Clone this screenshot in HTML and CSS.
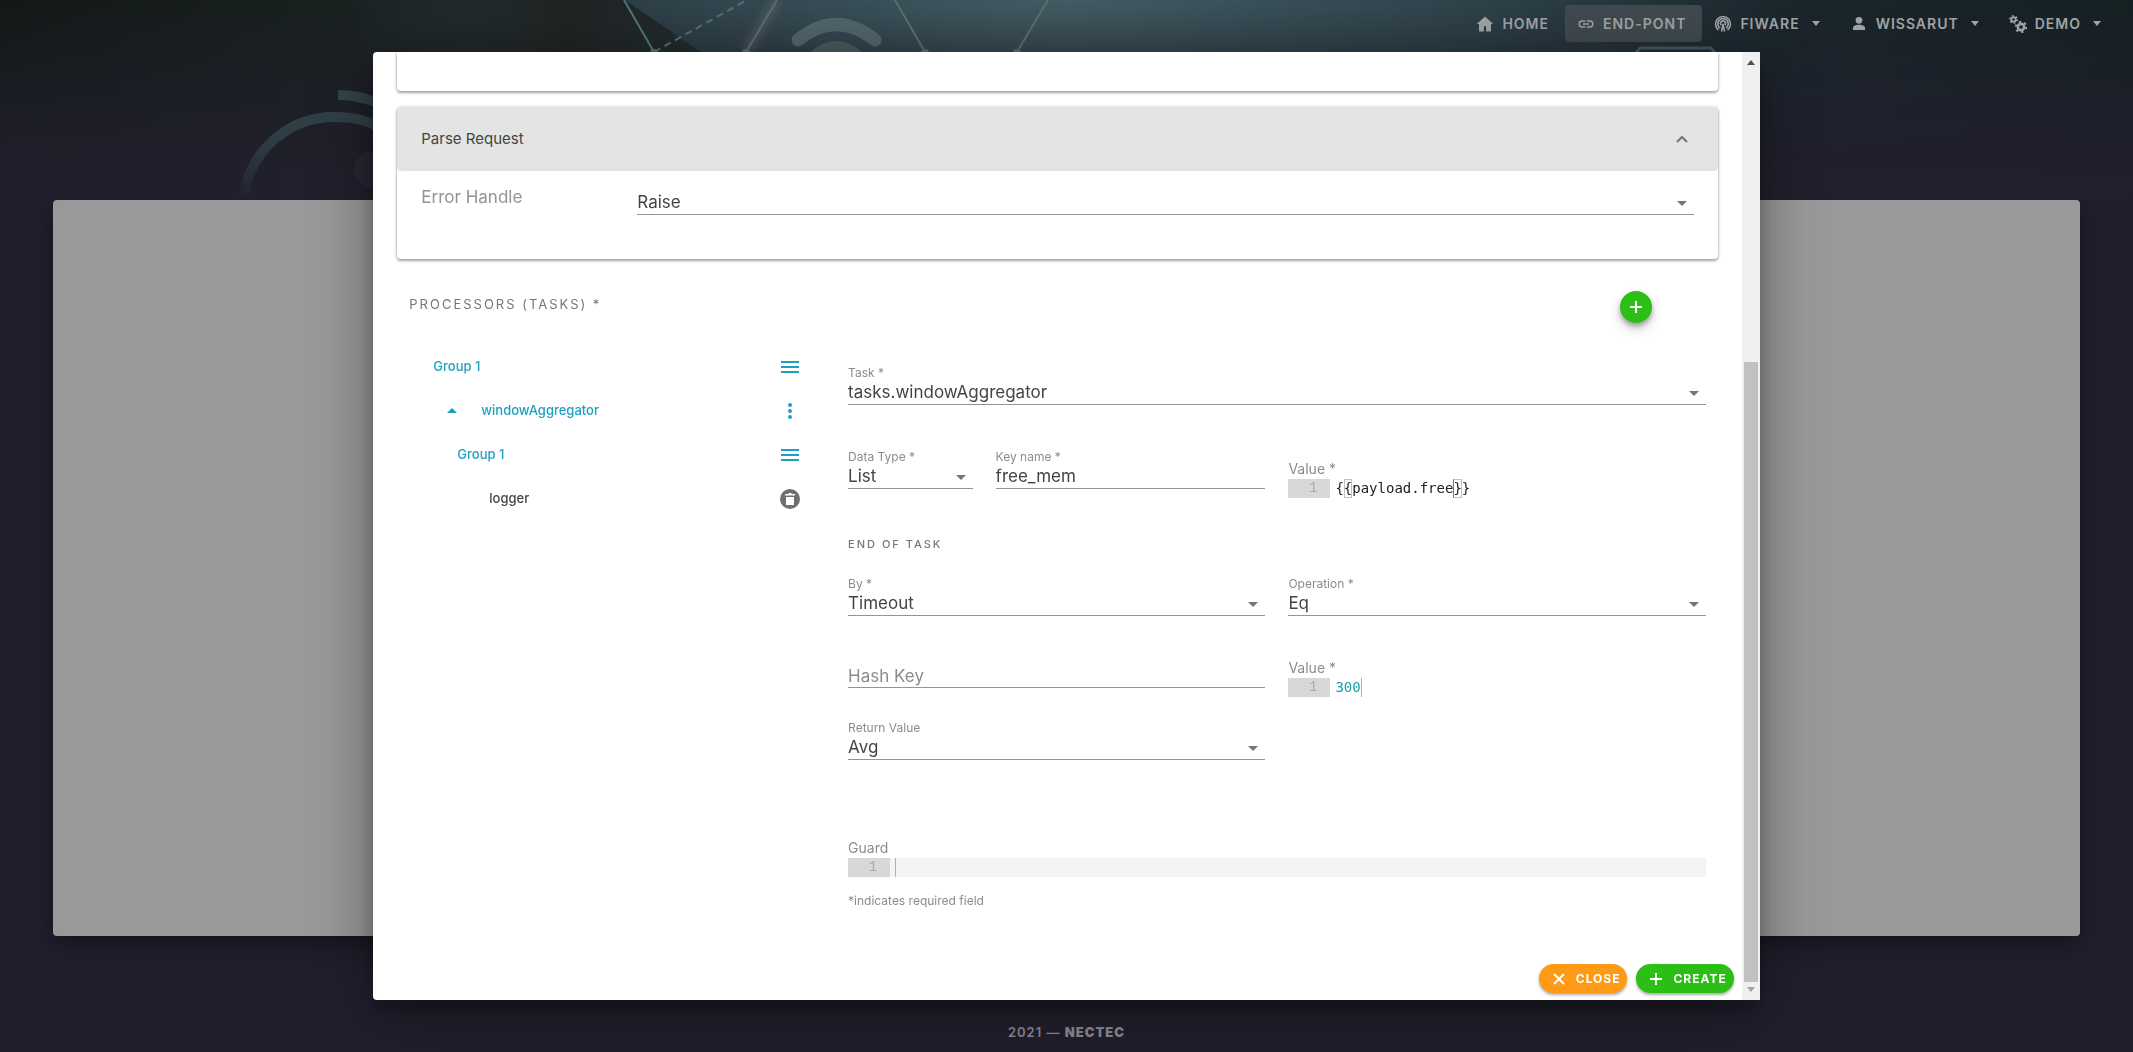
FILE: index.html
```html
<!DOCTYPE html>
<html lang="en">
<head>
<meta charset="utf-8">
<meta name="viewport" content="width=device-width, initial-scale=1">
<title>End-point</title>
<link rel="stylesheet" href="styles.css">
</head>
<body>
<header class="hero">
  <svg class="hero-art" viewBox="0 0 2133 200" preserveAspectRatio="xMidYMin slice" aria-hidden="true">
    <defs>
      <linearGradient id="fade" gradientUnits="userSpaceOnUse" x1="0" y1="90" x2="0" y2="200"><stop offset="0" stop-color="#33444b"/><stop offset=".5" stop-color="#2e3b43"/><stop offset="1" stop-color="#22212e"/></linearGradient>
      <linearGradient id="shade"><stop offset="0" stop-color="#1f2423" stop-opacity="0"/><stop offset=".6" stop-color="#1f2423"/><stop offset="1" stop-color="#222b2f"/></linearGradient>
      <filter id="glow" x="-2" y="-1" width="5" height="3"><feGaussianBlur stdDeviation="4"/></filter>
    </defs>
    <path d="M360 0h265l80 55H360z" fill="url(#shade)"/>
    <g fill="none" stroke="url(#fade)" stroke-width="10">
      <path d="M244 196A91 91 0 0 1 338 117Q360 117 380 127"/>
      <path d="M338 95Q360 95 380 104"/>
    </g>
    <circle cx="372" cy="170" r="18" fill="#272733"/>
    <g fill="none" stroke="#56706e" stroke-width="2">
      <path d="M624 0l30 52" stroke="#52786f"/>
      <path d="M654 52L747 0" stroke-dasharray="7 5"/>
      <path d="M777 0l-31 52" stroke="#8f7d7c" stroke-width="7" opacity=".4" filter="url(#glow)"/>
      <path d="M777 0l-31 52M895 0l30 52M1048 0l-31 52"/>
      <path d="M1425 50l3-2h49l5 8" stroke="#2c3d44"/>
      <path d="M1635 54l5-6h71l5 6" stroke="#405960" stroke-width="3"/>
    </g>
    <g fill="#56706e"><circle cx="654" cy="53" r="4"/><circle cx="746" cy="53" r="4"/><circle cx="925" cy="53" r="4"/><circle cx="1017" cy="53" r="4"/></g>
    <path d="M798 40Q836 9 875 40" fill="none" stroke="#50646a" stroke-width="13" stroke-linecap="round"/>
    <path d="M808 54Q836 28 865 54z" fill="#48595c"/>
  </svg>
  <nav class="nav" aria-label="Main">
    <a href="#home"><svg viewBox="0 0 24 24" width="18" height="18"><path d="M10.500 22v-7h3v7H20V12h3L12 2 1 12h3v10z" fill="currentColor"/></svg>Home</a>
    <a href="#endpoint" class="active"><svg viewBox="0 0 24 24" width="18" height="18"><path d="M3.900 12c0-1.710 1.390-3.100 3.100-3.100h4V7H7a5 5 0 0 0 0 10h4v-1.900H7A3.100 3.100 0 0 1 3.900 12zM8 13h8v-2H8zm9-6h-4v1.900h4a3.100 3.100 0 0 1 0 6.200h-4V17h4a5 5 0 0 0 0-10z" fill="currentColor"/></svg>End-Pont</a>
    <a href="#fiware" class="menu"><svg viewBox="0 0 24 24" width="18" height="22" fill="none" stroke="currentColor" stroke-width="2.200"><path d="M6 20A10 10 0 1 1 18 20M8 17.500A7 7 0 1 1 16 17.500M9.500 13.500A3.300 3.300 0 1 1 14.500 13.500M10 22l2-10 2 10"/></svg>Fiware<i class="caret"></i></a>
    <a href="#user" class="menu"><svg viewBox="0 0 24 24" width="18" height="18"><circle cx="12" cy="7" r="4.500" fill="currentColor"/><path d="M4 20v-3c0-2.500 4-4 8-4s8 1.500 8 4v3z" fill="currentColor"/></svg>Wissarut<i class="caret"></i></a>
    <a href="#demo"><svg viewBox="0 0 24 24" width="18" height="18" fill="none" stroke="currentColor"><circle cx="6" cy="6" r="3" stroke-width="2.500"/><circle cx="6" cy="6" r="5" stroke-width="2" stroke-dasharray="2.200 3.030"/><circle cx="16" cy="16" r="4.200" stroke-width="3.500"/><circle cx="16" cy="16" r="7" stroke-width="2.500" stroke-dasharray="3 4.330"/></svg>Demo<i class="caret"></i></a>
  </nav>
</header>
<div class="page-card"></div>
<footer class="page-footer">2021 — <b>NECTEC</b></footer>

<div class="backdrop">
  <div class="modal" role="dialog" aria-modal="true" aria-label="Create end-point">
    <form class="modal-body">
      <section class="card card-tail"></section>
      <section class="card">
        <button type="button" class="card-head" aria-expanded="true">Parse Request
          <svg viewBox="0 0 12 8" width="12" height="8"><path d="M1 7l5-5 5 5" fill="none" stroke="#757575" stroke-width="2"/></svg>
        </button>
        <div class="card-content">
          <label for="error">Error Handle</label>
          <span class="select"><select id="error"><option>Raise</option></select></span>
        </div>
      </section>

      <div class="section-head">
        <h2>Processors (Tasks) *</h2>
        <button type="button" class="fab" aria-label="Add processor"><svg viewBox="0 0 12 12" width="12" height="12"><path d="M6 0v12M0 6h12" stroke="#fff" stroke-width="2"/></svg></button>
      </div>

      <div class="tasks">
        <ul class="tree">
          <li class="l1"><span>Group 1</span><button type="button" aria-label="Group menu"><svg viewBox="0 0 20 20" width="20" height="20"><path d="M1 5h18M1 10h18M1 15h18" stroke="currentColor" stroke-width="2"/></svg></button></li>
          <li class="l2"><i class="caret up"></i><span>windowAggregator</span><button type="button" aria-label="Task menu"><svg viewBox="0 0 20 20" width="20" height="20" fill="currentColor"><circle cx="10" cy="4" r="2"/><circle cx="10" cy="10" r="2"/><circle cx="10" cy="16" r="2"/></svg></button></li>
          <li class="l3"><span>Group 1</span><button type="button" aria-label="Group menu"><svg viewBox="0 0 20 20" width="20" height="20"><path d="M1 5h18M1 10h18M1 15h18" stroke="currentColor" stroke-width="2"/></svg></button></li>
          <li class="l4"><span>logger</span><button type="button" aria-label="Delete logger"><svg viewBox="0 0 20 20" width="20" height="20"><circle cx="10" cy="10" r="10" fill="#6f6f6f"/><path d="M5 5h3l1-1h2l1 1h3v1.500H5zM6 8h8v8H6z" fill="#fff"/></svg></button></li>
        </ul>

        <div class="fields">
          <div class="field wide">
            <label for="task">Task *</label>
            <span class="select"><select id="task"><option>tasks.windowAggregator</option></select></span>
          </div>
          <div class="pair row-data">
            <div class="field"><label for="dtype">Data Type *</label><span class="select"><select id="dtype"><option>List</option></select></span></div>
            <div class="field"><label for="key">Key name *</label><input id="key" type="text" value="free_mem"></div>
          </div>
          <div class="code-field row-data">
            <label for="value1">Value *</label>
            <div class="editor"><span class="gutter">1</span><span class="line"><input id="value1" type="text" value="{{payload.free}}"><i class="match first"></i><i class="match last"></i></span></div>
          </div>
          <h3 class="wide">End of task</h3>
          <div class="field row-by"><label for="by">By *</label><span class="select"><select id="by"><option>Timeout</option></select></span></div>
          <div class="field row-by"><label for="op">Operation *</label><span class="select"><select id="op"><option>Eq</option></select></span></div>
          <div class="field bare row-hash"><input id="hash" type="text" placeholder="Hash Key" aria-label="Hash Key"></div>
          <div class="code-field row-hash">
            <label for="value2">Value *</label>
            <div class="editor"><span class="gutter">1</span><span class="line"><input id="value2" class="number" type="text" value="300"><i class="cursor after"></i></span></div>
          </div>
          <div class="field row-by"><label for="ret">Return Value</label><span class="select"><select id="ret"><option>Avg</option></select></span></div>
          <div class="code-field guard wide">
            <label for="guard">Guard</label>
            <div class="editor"><span class="gutter">1</span><span class="line"><input id="guard" type="text"><i class="cursor"></i></span></div>
          </div>
          <p class="note wide">*indicates required field</p>
        </div>
      </div>

      <div class="actions">
        <button type="button" class="btn close"><svg viewBox="0 0 12 12" width="12" height="12"><path d="M1 1l10 10M11 1L1 11" stroke="currentColor" stroke-width="2"/></svg>Close</button>
        <button type="button" class="btn create"><svg viewBox="0 0 12 12" width="12" height="12"><path d="M6 0v12M0 6h12" stroke="currentColor" stroke-width="2"/></svg>Create</button>
      </div>
    </form>
    <div class="scrollbar" aria-hidden="true"><i class="arrow up"></i><div class="track"><div class="thumb"></div></div><i class="arrow down"></i></div>
  </div>
</div>
</body>
</html>
```
FILE: styles.css
```css
* { box-sizing: border-box; }

body {
  margin: 0;
  min-height: 100vh;
  display: flex;
  flex-direction: column;
  background: #211f2d;
  color: #444;
  font: 17px/24px Inter, "Open Sans", sans-serif;
}

button, input, select { font: inherit; color: inherit; }
button { border: 0; padding: 0; background: none; cursor: pointer; }

/* page behind the dialog */
.hero {
  position: relative;
  height: 200px;
  background:
    linear-gradient(180deg, transparent 0, #211f2dcc 70%, #211f2d 100%),
    radial-gradient(ellipse 34% 160% at 50% 0, #435d64 0, #31464e 50%, #31464e00 100%),
    linear-gradient(90deg, #121817, #1f2826 30%, #1d2b32 70%, #152023);
}
.hero-art { position: absolute; inset: 0; width: 100%; height: 100%; }
.nav {
  position: relative;
  display: flex;
  justify-content: flex-end;
  padding: 5px 22px 0 0;
}
.nav a {
  display: flex;
  align-items: center;
  height: 37px;
  padding: 0 10px 0 12px;
  border-radius: 4px;
  color: #a0a3a4;
  font-size: 14px;
  font-weight: 600;
  letter-spacing: 1px;
  text-transform: uppercase;
  text-decoration: none;
}
.nav svg { margin-right: 8px; }
.nav a.active { padding: 0 16px 0 12px; background: #40494f; }
.nav a:first-child { padding-right: 16px; }
.nav a.menu { padding-right: 18px; }
.caret {
  margin-left: 12px;
  border: 4px solid transparent;
  border-top: 5px solid;
  border-bottom: 0;
}
.caret.up { border: 5px solid transparent; border-bottom: 5px solid; border-top: 0; }
.page-card {
  flex: 1;
  margin: 0 53px;
  border-radius: 4px;
  background: #999;
  box-shadow: 0 8px 24px #0006;
}
.page-footer {
  padding: 84px 0 8px;
  text-align: center;
  color: #8b8a91;
  font-size: 13px;
  font-weight: 600;
  letter-spacing: 1px;
}

/* dialog */
.backdrop {
  position: fixed;
  inset: 0;
  display: flex;
  align-items: center;
  justify-content: center;
}
.modal {
  display: flex;
  width: 65%;
  height: calc(90vh + 2px);
  border-radius: 4px 0 0 4px;
  overflow: hidden;
  background: #fff;
  box-shadow: 0 11px 15px #0003, 0 12px 60px #0006;
}
.modal-body {
  flex: 1;
  min-width: 0;
  display: flex;
  flex-direction: column;
  padding: 0 24px;
}

.card {
  border-radius: 4px;
  box-shadow: 0 2px 3px #0005, 0 0 3px #0003;
}
.card-tail { height: 39px; margin-bottom: 16px; border-radius: 0 0 4px 4px; }
.card-head {
  display: flex;
  align-items: center;
  justify-content: space-between;
  width: 100%;
  height: 64px;
  padding: 1px 30px 0 24px;
  border-radius: 4px;
  background: #e4e4e4;
  font-size: 15px;
}
.card-content {
  display: grid;
  grid-template-columns: 192px 1fr;
  gap: 24px;
  padding: 14px 24px 44px;
}
.card-content label { color: #939393; }
.card-content .select { margin-top: 7px; }

.section-head {
  display: flex;
  align-items: center;
  justify-content: space-between;
  height: 32px;
  margin: 32px 66px 0 12px;
}
h2, h3 { margin: 0; color: #777; font-weight: 400; text-transform: uppercase; }
h2 { padding-bottom: 6px; font-size: 13px; line-height: 24px; letter-spacing: 2px; }
h3 { font-size: 11px; line-height: 18px; letter-spacing: 2px; font-weight: 500; margin-top: 37px; }
.fab {
  display: flex;
  align-items: center;
  justify-content: center;
  width: 32px;
  height: 32px;
  border-radius: 50%;
  background: #2bbf16;
  box-shadow: 0 3px 5px #0004, 0 6px 12px #0003;
}

.tasks {
  display: grid;
  grid-template-columns: 1fr 2fr;
  gap: 10px;
  padding: 0 12px;
}
.tree {
  margin: 22px 38px 0 0;
  padding: 0;
  list-style: none;
  color: #1f9fbf;
  font-size: 13px;
  font-weight: 500;
}
.tree li { display: flex; align-items: center; height: 44px; }
.tree span { padding-bottom: 2px; }
.tree button { display: flex; margin-left: auto; }
.l1 { padding-left: 24px; }
.l2 { padding-left: 26px; }
.l2 span { padding-left: 24px; }
.l3 { padding-left: 48px; }
.l4 { padding-left: 80px; color: #444; }

.fields {
  display: grid;
  grid-template-columns: 1fr 1fr;
  column-gap: 23px;
  margin-top: 41px;
}
.wide { grid-column: 1 / -1; }
.field { display: flex; flex-direction: column; min-width: 0; }
.field label, .note { color: #8c8c8c; font-size: 12px; line-height: 18px; }
.select { position: relative; display: block; }
.select::after {
  content: "";
  position: absolute;
  right: 7px;
  top: 9px;
  border: 5px solid transparent;
  border-top: 5px solid #757575;
  border-bottom: 0;
  pointer-events: none;
}
select, .field input {
  display: block;
  width: 100%;
  height: 23px;
  padding: 0 0 2px;
  border: 0;
  border-bottom: 1px solid #949494;
  border-radius: 0;
  outline: 0;
  background: none;
  line-height: 20px;
  appearance: none;
}
.field input::placeholder { color: #8c8c8c; opacity: 1; }
.field.bare input { padding: 0; }
.pair { display: grid; grid-template-columns: 6fr 13fr; gap: 23px; }
.row-data { min-height: 50px; margin-top: 43px; }
.row-by { margin-top: 22px; }
.row-hash { min-height: 50px; margin-top: 31px; }
.bare { padding-top: 18px; }

.code-field { display: flex; flex-direction: column; justify-content: flex-end; }
.code-field label { color: #8c8c8c; font-size: 14px; line-height: 20px; }
.editor { display: flex; height: 19px; font: 14px/19px "DejaVu Sans Mono", monospace; }
.gutter {
  width: 42px;
  padding-right: 13px;
  background: #d8d8d8;
  color: #aaa;
  text-align: right;
  font-family: "Liberation Mono", monospace;
}
.line { position: relative; flex: 1; padding-left: 5px; }
.line input {
  display: block;
  width: 100%;
  height: 19px;
  padding: 0;
  border: 0;
  outline: 0;
  background: none;
  color: #222;
}
.line .number { color: #17a2a8; }
.match { position: absolute; top: 0; width: 1ch; height: 19px; border: 1px solid #c0c0c0; }
.match.first { left: calc(5px + 1ch); }
.match.last { left: calc(5px + 14ch); border-left-color: #777; }
.cursor { position: absolute; top: 0; left: 5px; width: 1px; height: 19px; background: #b0b0b0; }
.cursor.after { left: calc(5px + 3ch); }
.guard { margin-top: 78px; }
.guard .line { background: #f4f4f4; }
.note { margin: 15px 0 0; }

.actions {
  display: flex;
  justify-content: flex-end;
  gap: 9px;
  margin: auto -16px 7px 0;
}
.btn {
  display: flex;
  align-items: center;
  gap: 11px;
  height: 29px;
  padding: 0 7px 0 14px;
  border-radius: 15px;
  color: #fff;
  font-size: 12px;
  font-weight: 700;
  letter-spacing: 1px;
  text-transform: uppercase;
  box-shadow: 0 2px 3px #0005;
}
.close { background: #ff9a17; }
.create { background: #2bbf16; }

.scrollbar {
  display: flex;
  flex-direction: column;
  align-items: center;
  justify-content: space-between;
  width: 18px;
  padding: 8px 0;
  background: #f0f0f0;
}
.arrow { border: 4px solid transparent; }
.arrow.up { border-bottom: 5px solid #505050; border-top: 0; }
.arrow.down { border-top: 5px solid #a3a3a3; border-bottom: 0; }
.track { flex: 1; display: flex; align-items: flex-end; width: 14px; margin: 5px 0; }
.thumb { width: 100%; height: 68%; background: #c1c1c1; }
```
